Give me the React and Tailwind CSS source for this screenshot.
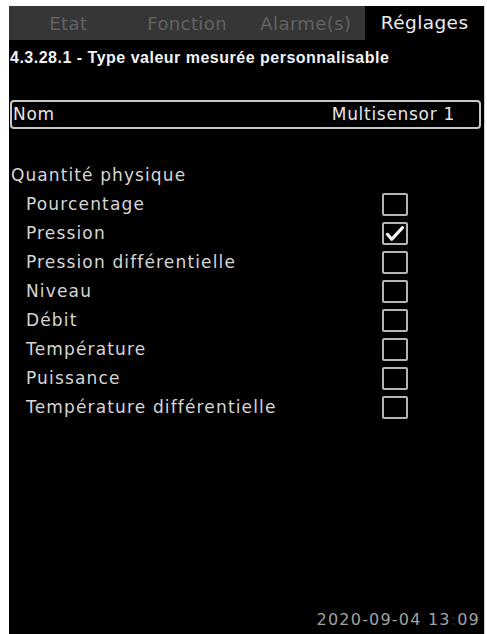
const tabs = ["Etat", "Fonction", "Alarme(s)", "Réglages"];

const items = [
  { label: "Pourcentage", checked: false },
  { label: "Pression", checked: true },
  { label: "Pression différentielle", checked: false },
  { label: "Niveau", checked: false },
  { label: "Débit", checked: false },
  { label: "Température", checked: false },
  { label: "Puissance", checked: false },
  { label: "Température différentielle", checked: false },
];

function CheckBox({ checked }) {
  return (
    <div className="w-[26px] h-[23px] rounded-[2px] border-2 border-[#b4b4b4] flex items-center justify-center">
      {checked && (
        <svg viewBox="0 0 24 20" className="w-[20px] h-[17px]">
          <polyline
            points="3,11 8,17 21,3"
            fill="none"
            stroke="#f4f4f4"
            strokeWidth="3.8"
            strokeLinecap="round"
            strokeLinejoin="round"
          />
        </svg>
      )}
    </div>
  );
}

export default function App() {
  return (
    <div
      className="w-[487px] h-[634px] bg-white pl-[9px] pt-[6px] pr-[2px] overflow-hidden"
      style={{ fontFamily: '"DejaVu Sans", Verdana, sans-serif' }}
    >
      <div className="h-full bg-black flex flex-col border-r border-[#cfcfcf]">
        {/* Tabs */}
        <div className="flex h-[34px] bg-[#363636]">
          {tabs.map((t, i) => (
            <div
              key={t}
              className={
                i === 3
                  ? "flex-1 flex items-center justify-center bg-black text-[#ececec] text-[18.5px] tracking-[0.4px]"
                  : "flex-1 flex items-center justify-center text-[#626262] text-[18px] tracking-[0.4px]"
              }
            >
              {t}
            </div>
          ))}
        </div>

        {/* Title */}
        <div
          className="h-[36px] flex items-center pl-[1px] text-[#f2f2f2] text-[16px] font-bold tracking-[0.5px]"
          style={{ fontFamily: '"Liberation Sans", Arial, sans-serif' }}
        >
          4.3.28.1 - Type valeur mesurée personnalisable
        </div>

        {/* Nom row */}
        <div className="mt-[24px] ml-[1px] mr-[3px] h-[29px] rounded-[4px] border-2 border-[#c8c8c8] flex items-center justify-between pl-[1px] pr-[24px] text-[#e6e6e6] text-[17px] tracking-[0.7px]">
          <span>Nom</span>
          <span>Multisensor 1</span>
        </div>

        {/* Quantité physique */}
        <div className="mt-[32px] h-[29px] flex items-center pl-[2px] text-[#d6d6d6] text-[17px] tracking-[1.1px]">
          Quantité physique
        </div>

        <div className="flex flex-col">
          {items.map((it) => (
            <div
              key={it.label}
              className="h-[29px] flex items-center justify-between pl-[17px] pr-[76px] text-[#d6d6d6] text-[17px] tracking-[1.15px]"
            >
              <span>{it.label}</span>
              <CheckBox checked={it.checked} />
            </div>
          ))}
        </div>

        {/* Date */}
        <div className="mt-auto h-[26px] flex items-center justify-end pr-[4px] pb-[3px] text-[#a2a2a2] text-[16px] tracking-[1.2px]">
          2020-09-04 13<span className="text-[#2a2a2a]">:</span>09
        </div>
      </div>
    </div>
  );
}
